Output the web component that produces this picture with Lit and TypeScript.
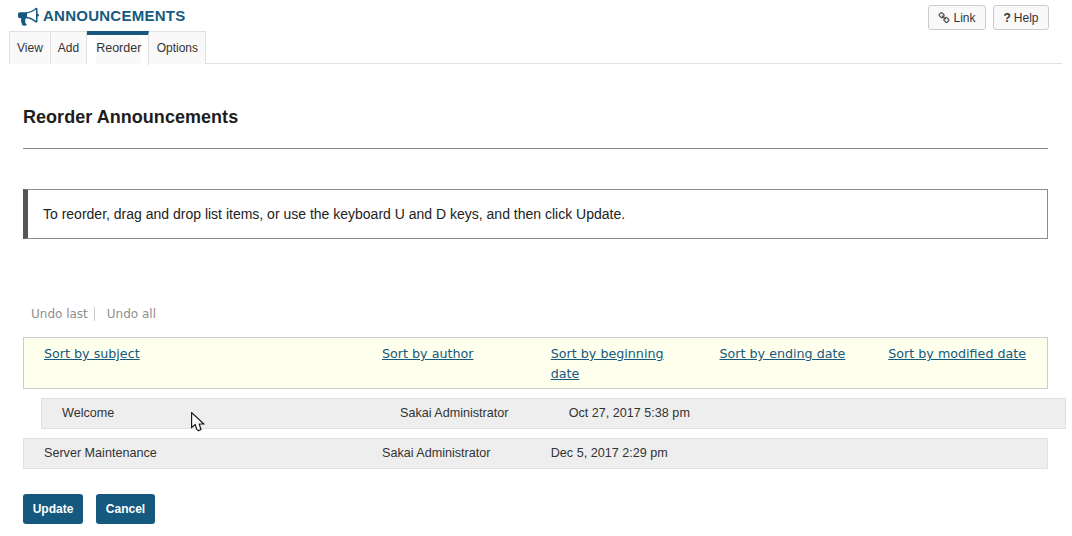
import { LitElement, html, css, svg } from "lit";
import { customElement } from "lit/decorators.js";

const bullhorn = svg`<path d="M1664 736q53 0 90.5 37.5t37.5 90.5-37.5 90.5-90.5 37.5v384q0 52-38 90t-90 38q-417-347-812-380-58 19-91 66t-31 100.5 40 92.5q-20 33-23 65.5t6 58 33.5 55 48 50 61.5 50.5q-29 58-111.5 83t-168.5 11.5-132-55.5q-7-23-29.5-87.5t-32-94.5-23-89-15-101 3.5-98.5 22-110.5h-122q-66 0-113-47t-47-113v-192q0-66 47-113t113-47h480q435 0 896-384 52 0 90 38t38 90v384zm-128 604v-954q-394 302-768 343v270q377 42 768 341z"/>`;
const link = svg`<path d="M1520 1216q0-40-28-68l-208-208q-28-28-68-28-42 0-72 32 3 3 19 18.500t21.500 21.500 15 19 13 25.500 3.500 27.500q0 40-28 68t-68 28q-15 0-27.500-3.500t-25.500-13-19-15-21.500-21.500-18.500-19q-33 31-33 73 0 40 28 68l206 207q27 27 68 27 40 0 68-26l147-146q28-28 28-67zm-703-705q0-40-28-68l-206-207q-28-28-68-28-39 0-68 27l-147 146q-28 28-28 67 0 40 28 68l208 208q27 27 68 27 42 0 72-31-3-3-19-18.500t-21.500-21.500-15-19-13-25.500-3.500-27.500q0-40 28-68t68-28q15 0 27.500 3.500t25.500 13 19 15 21.500 21.500 18.500 19q33-31 33-73zm895 705q0 120-85 203l-147 146q-83 83-203 83-121 0-204-85l-206-207q-83-83-83-203 0-123 88-209l-88-88q-86 88-208 88-120 0-204-84l-208-208q-84-84-84-204t85-203l147-146q83-83 203-83 121 0 204 85l206 207q83 83 83 203 0 123-88 209l88 88q86-88 208-88 120 0 204 84l208 208q84 84 84 204z"/>`;

const sorts = [
  "Sort by subject",
  "Sort by author",
  "Sort by beginning date",
  "Sort by ending date",
  "Sort by modified date",
];

@customElement("app-root")
export class AppRoot extends LitElement {
  static override styles = css`
    :host {
      display: block;
      position: relative;
      width: 1072px;
      height: 536px;
      overflow: hidden;
      background: #fff;
      color: #262626;
      font-family: "Liberation Sans", Arial, sans-serif;
      font-size: 12px;
    }

    .top {
      display: flex;
      justify-content: space-between;
      margin: 0 10px 0 9px;
      height: 64px;
      border-bottom: 1px solid #e0e0e0;
      box-sizing: border-box;
    }

    .title {
      display: flex;
      align-items: center;
      gap: 4px;
      height: 30px;
      margin-bottom: 1px;
      padding-left: 9px;
      color: #15597e;
      font-size: 15px;
      font-weight: bold;
      letter-spacing: 0.25px;
    }

    .title svg {
      width: 21px;
      height: 21px;
      fill: #15597e;
    }

    .tabs {
      display: flex;
      height: 33px;
    }

    .tab {
      display: flex;
      align-items: center;
      padding: 0 7px;
      background: #f9f9f9;
      border: 1px solid #e0e0e0;
      border-left-width: 0;
      border-bottom: 0;
      color: #333;
    }

    .tab:first-child {
      border-left-width: 1px;
    }

    .tab.options {
      width: 57px;
      box-sizing: border-box;
      padding: 0 0 0 7.5px;
    }

    .tab.active {
      height: 34px;
      width: 62px;
      box-sizing: border-box;
      padding: 0 0 0 9px;
      align-items: flex-end;
      background: #fff;
      border-top: 4px solid #15597e;
      font-size: 12.5px;
      position: relative;
      z-index: 1;
    }

    .tab.active span {
      display: flex;
      align-items: center;
      height: 28px;
      margin-bottom: 1px;
      padding-bottom: 5px;
      box-sizing: border-box;
      background: #f9f9f9;
    }

    .tools {
      display: flex;
      gap: 7px;
      padding: 5px 13px 0 0;
    }

    .tool {
      display: flex;
      align-items: center;
      gap: 3px;
      height: 25px;
      padding: 0 9.5px;
      box-sizing: border-box;
      background: #f9f9f9;
      border: 1px solid #ccc;
      border-radius: 3px;
      color: #333;
    }

    .tool svg {
      width: 12px;
      height: 12px;
      fill: #555;
    }

    .tool b {
      font-size: 12px;
    }

    .main {
      padding: 0 24px 0 23px;
    }

    h2 {
      margin: 0;
      padding: 42px 0 20px;
      font-size: 18px;
      line-height: 22px;
      font-weight: bold;
      letter-spacing: 0.04px;
      color: #1d1d1d;
      border-bottom: 1px solid #8a8a8a;
    }

    .note {
      margin-top: 40px;
      height: 50px;
      box-sizing: border-box;
      display: flex;
      align-items: center;
      padding-left: 15px;
      border: 1px solid #8c8c8c;
      border-left: 5px solid #555;
      font-size: 14px;
      color: #222;
    }

    .undo {
      display: flex;
      align-items: center;
      margin-top: 66px;
      height: 17px;
      padding-left: 8px;
      font-family: "DejaVu Sans", Verdana, sans-serif;
      font-size: 12px;
      color: #8f8f8f;
    }

    .undo span + span {
      margin-left: 6px;
      padding-left: 12px;
      border-left: 1px solid #ccc;
    }

    .sortbar,
    .row {
      display: grid;
      grid-template-columns: 338px 168.75px 168.75px 168.75px 1fr;
      padding: 0 20px;
      border-style: solid;
      border-width: 1px;
    }

    .sortbar {
      margin-top: 15px;
      height: 52px;
      box-sizing: border-box;
      padding-top: 6px;
      background: #ffffee;
      border-color: #ccc;
      font-family: "DejaVu Sans", Verdana, sans-serif;
      font-size: 12.7px;
      line-height: 20px;
    }

    .sortbar a {
      display: block;
      max-width: 125px;
      color: #15597e;
      text-decoration: underline;
    }

    .sortbar a.wide {
      max-width: none;
      white-space: nowrap;
    }

    .row {
      height: 31px;
      box-sizing: border-box;
      align-items: center;
      padding-bottom: 2px;
      background: #eee;
      border-color: #e0e0e0;
      color: #333;
      font-size: 12.6px;
    }

    .row.first,
    .row.second {
      margin-top: 9px;
    }

    /* the row being dragged sits off its slot */
    .row.dragging {
      position: relative;
      left: 18px;
    }

    .actions {
      display: flex;
      gap: 13px;
      margin-top: 25px;
    }

    .btn {
      display: flex;
      align-items: center;
      height: 30px;
      box-sizing: border-box;
      width: 60px;
      justify-content: center;
      background: #15597e;
      border-radius: 3px;
      color: #fff;
      font-weight: bold;
    }

    .btn + .btn {
      width: 59px;
    }

    .cursor {
      position: absolute;
      left: 191px;
      top: 412px;
      width: 14px;
      height: 20px;
    }
  `;

  override render() {
    return html`
      <div class="top">
        <div>
          <div class="title">
            <svg viewBox="0 0 1792 1792">${bullhorn}</svg>ANNOUNCEMENTS
          </div>
          <div class="tabs">
            <div class="tab">View</div>
            <div class="tab">Add</div>
            <div class="tab active"><span>Reorder</span></div>
            <div class="tab options">Options</div>
          </div>
        </div>
        <div class="tools">
          <div class="tool"><svg viewBox="0 0 1792 1792">${link}</svg>Link</div>
          <div class="tool"><b>?</b>Help</div>
        </div>
      </div>
      <div class="main">
        <h2>Reorder Announcements</h2>
        <div class="note">
          To reorder, drag and drop list items, or use the keyboard U and D
          keys, and then click Update.
        </div>
        <div class="undo"><span>Undo last</span><span>Undo all</span></div>
        <div class="sortbar">
          ${sorts.map(
            (s, i) =>
              html`<div><a class=${i === 2 ? "" : "wide"}>${s}</a></div>`
          )}
        </div>
        <div class="row first dragging">
          <div>Welcome</div>
          <div>Sakai Administrator</div>
          <div>Oct 27, 2017 5:38 pm</div>
        </div>
        <div class="row second">
          <div>Server Maintenance</div>
          <div>Sakai Administrator</div>
          <div>Dec 5, 2017 2:29 pm</div>
        </div>
        <div class="actions">
          <div class="btn">Update</div>
          <div class="btn">Cancel</div>
        </div>
      </div>
      <svg class="cursor" viewBox="0 0 14 20">
        <path
          d="M0.6 0.6V15.5L4.2 12.5L5.8 17.5L7.5 18.8L10 17.5L8.2 12H12.8Z"
          fill="#fff"
          stroke="#1a1a1a"
          stroke-width="1.2"
        />
      </svg>
    `;
  }
}
